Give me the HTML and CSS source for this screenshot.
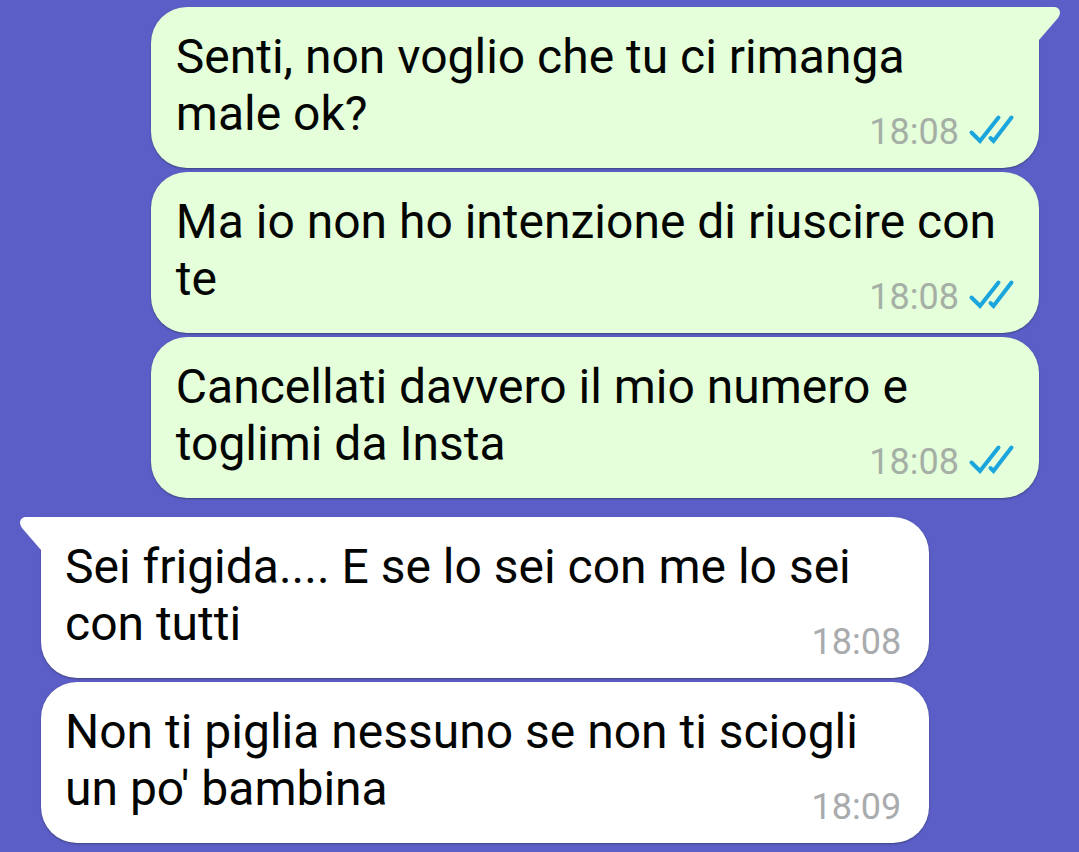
FILE: index.html
```
<!DOCTYPE html>
<html lang="it">
<head>
<meta charset="utf-8">
<meta name="viewport" content="width=device-width, initial-scale=1">
<title>Chat</title>
<link rel="stylesheet" href="styles.css">
</head>
<body>
<svg class="defs" width="0" height="0" aria-hidden="true">
  <symbol id="ticks" viewBox="0 0 48 32">
    <path d="M4.500 18.500 13 27 31.500 3.500M23.500 24 26.500 27 44.500 3.500" fill="none" stroke="currentColor" stroke-width="4" stroke-linecap="round" stroke-linejoin="miter"/>
  </symbol>
  <symbol id="tail" viewBox="0 0 24 36">
    <path d="M0 0H17Q22 1 22 6Q22 8 20 11L1 33V34H0Z" fill="currentColor"/>
  </symbol>
</svg>
<main class="chat">
  <section class="group group-out">
    <article class="bubble bubble-first">
      <svg class="tail" aria-hidden="true"><use href="#tail"/></svg>
      <span class="text">Senti, non voglio che tu ci rimanga male ok?</span>
      <span class="meta"><time>18:08</time><svg class="ticks" role="img" aria-label="Letto"><use href="#ticks"/></svg></span>
    </article>
    <article class="bubble">
      <span class="text">Ma io non ho intenzione di riuscire con te</span>
      <span class="meta"><time>18:08</time><svg class="ticks" role="img" aria-label="Letto"><use href="#ticks"/></svg></span>
    </article>
    <article class="bubble">
      <span class="text">Cancellati davvero il mio numero e toglimi da Insta</span>
      <span class="meta"><time>18:08</time><svg class="ticks" role="img" aria-label="Letto"><use href="#ticks"/></svg></span>
    </article>
  </section>
  <section class="group group-in">
    <article class="bubble bubble-first">
      <svg class="tail" aria-hidden="true"><use href="#tail"/></svg>
      <span class="text">Sei frigida.... E se lo sei con me lo sei con tutti</span>
      <span class="meta"><time>18:08</time></span>
    </article>
    <article class="bubble">
      <span class="text">Non ti piglia nessuno se non ti sciogli un po' bambina</span>
      <span class="meta"><time>18:09</time></span>
    </article>
  </section>
</main>
</body>
</html>
```
FILE: styles.css
```
body {
  margin: 0;
  background: #5c5ec7;
  font-family: Roboto, "Liberation Sans", sans-serif;
  color: #030503;
}

.defs {
  position: absolute;
}

.chat {
  display: flex;
  flex-direction: column;
  gap: 19px;
  padding: 7px 40px 9px 41px;
}

.group {
  display: flex;
  flex-direction: column;
  gap: 4px;
}

.group-out {
  align-items: flex-end;
  --bubble: #e4ffda;
}

.group-in {
  align-items: flex-start;
  --bubble: #ffffff;
}

.bubble {
  position: relative;
  box-sizing: border-box;
  width: 89%;
  padding: 21px 24px 14px;
  border-radius: 36px;
  background: var(--bubble);
  box-shadow: 0 1px 2px rgba(40, 50, 80, 0.6);
  font-size: 48px;
  line-height: 57px;
}

.group-out .bubble {
  padding-left: 25px;
}

.group-out .bubble-first {
  border-top-right-radius: 0;
}

.group-in .bubble-first {
  border-top-left-radius: 0;
}

.tail {
  position: absolute;
  top: 0;
  left: 100%;
  width: 24px;
  height: 36px;
  margin-left: -1px;
  color: var(--bubble);
}

.group-in .tail {
  right: 100%;
  left: auto;
  margin: 0 -1px 0 0;
  transform: scaleX(-1);
}

/* Floats beside the last line of the message. */
.meta {
  float: right;
  display: flex;
  align-items: center;
  gap: 8px;
  margin-top: 25px;
  color: #a5afa5;
  font-size: 36px;
  line-height: 44px;
}

.group-in .meta {
  margin-right: 4px;
  color: #a9abad;
}

.ticks {
  width: 48px;
  height: 32px;
  margin-bottom: 4px;
  color: #1ba5dd;
}
```
